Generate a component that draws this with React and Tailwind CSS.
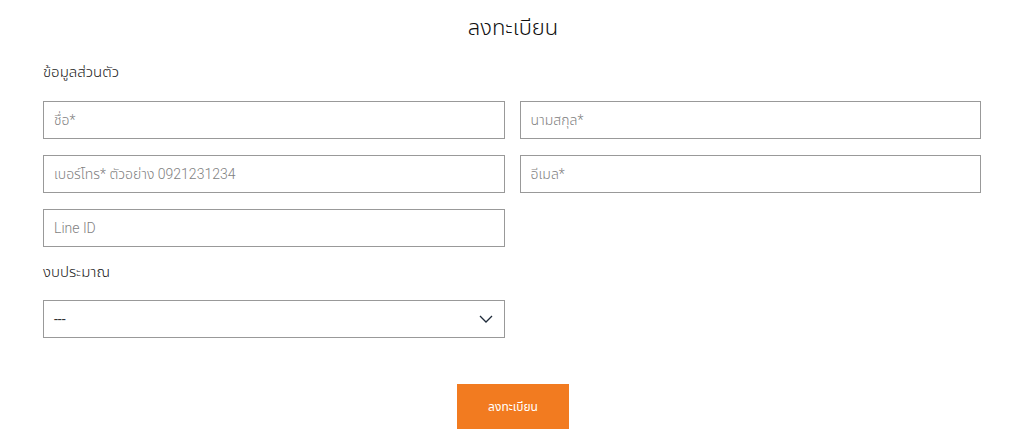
import React from 'react';

const font = { fontFamily: 'Roboto, "Noto Sans Thai", "Noto Sans Thai UI", "Noto Sans", "Liberation Sans", sans-serif' };

function Field({ placeholder }) {
    return (
        <input
            type="text"
            placeholder={placeholder}
            className="w-full h-[38px] border border-[#999999] px-[10px] text-[14px] font-light text-[#333] placeholder:text-[#7f7f7f] outline-none bg-white"
        />
    );
}

export default function App() {
    return (
        <div className="bg-white w-[1017px] h-[445px] overflow-hidden text-[#222] font-light" style={font}>
            <div className="ml-[43px] w-[938px]">
                {/* Title */}
                <h1 className="text-center text-[22px] font-light leading-none pt-[17px] h-[57px] text-[#111] pl-[2px]">ลงทะเบียน</h1>

                {/* Personal info */}
                <div className="text-[15px] leading-[20px] h-[44px] pt-[5px] text-[#1a1a1a]">ข้อมูลส่วนตัว</div>

                <div className="grid grid-cols-2 gap-x-[15px] gap-y-[16px]">
                    <Field placeholder="ชื่อ*" />
                    <Field placeholder="นามสกุล*" />
                    <Field placeholder="เบอร์โทร* ตัวอย่าง 0921231234" />
                    <Field placeholder="อีเมล*" />
                    <Field placeholder="Line ID" />
                </div>

                {/* Budget */}
                <div className="text-[15px] leading-[20px] pt-[15px] h-[53px] text-[#1a1a1a]">งบประมาณ</div>
                <div className="grid grid-cols-2 gap-x-[15px]">
                    <div className="h-[38px] border border-[#999999] flex items-center justify-between pl-[10px] pr-[11px]">
                        <span className="text-[14px] font-normal text-[#333]">---</span>
                        <svg width="14" height="9" viewBox="0 0 14 9" fill="none" stroke="#1f2b3a" strokeWidth="1.3">
                            <path d="M1 1l6 6 6-6" />
                        </svg>
                    </div>
                </div>

                {/* Submit */}
                <div className="flex justify-center pt-[46px]">
                    <button className="w-[112px] h-[45px] bg-[#f27b20] text-white text-[12px] font-normal ml-[2px]">ลงทะเบียน</button>
                </div>
            </div>
        </div>
    );
}
